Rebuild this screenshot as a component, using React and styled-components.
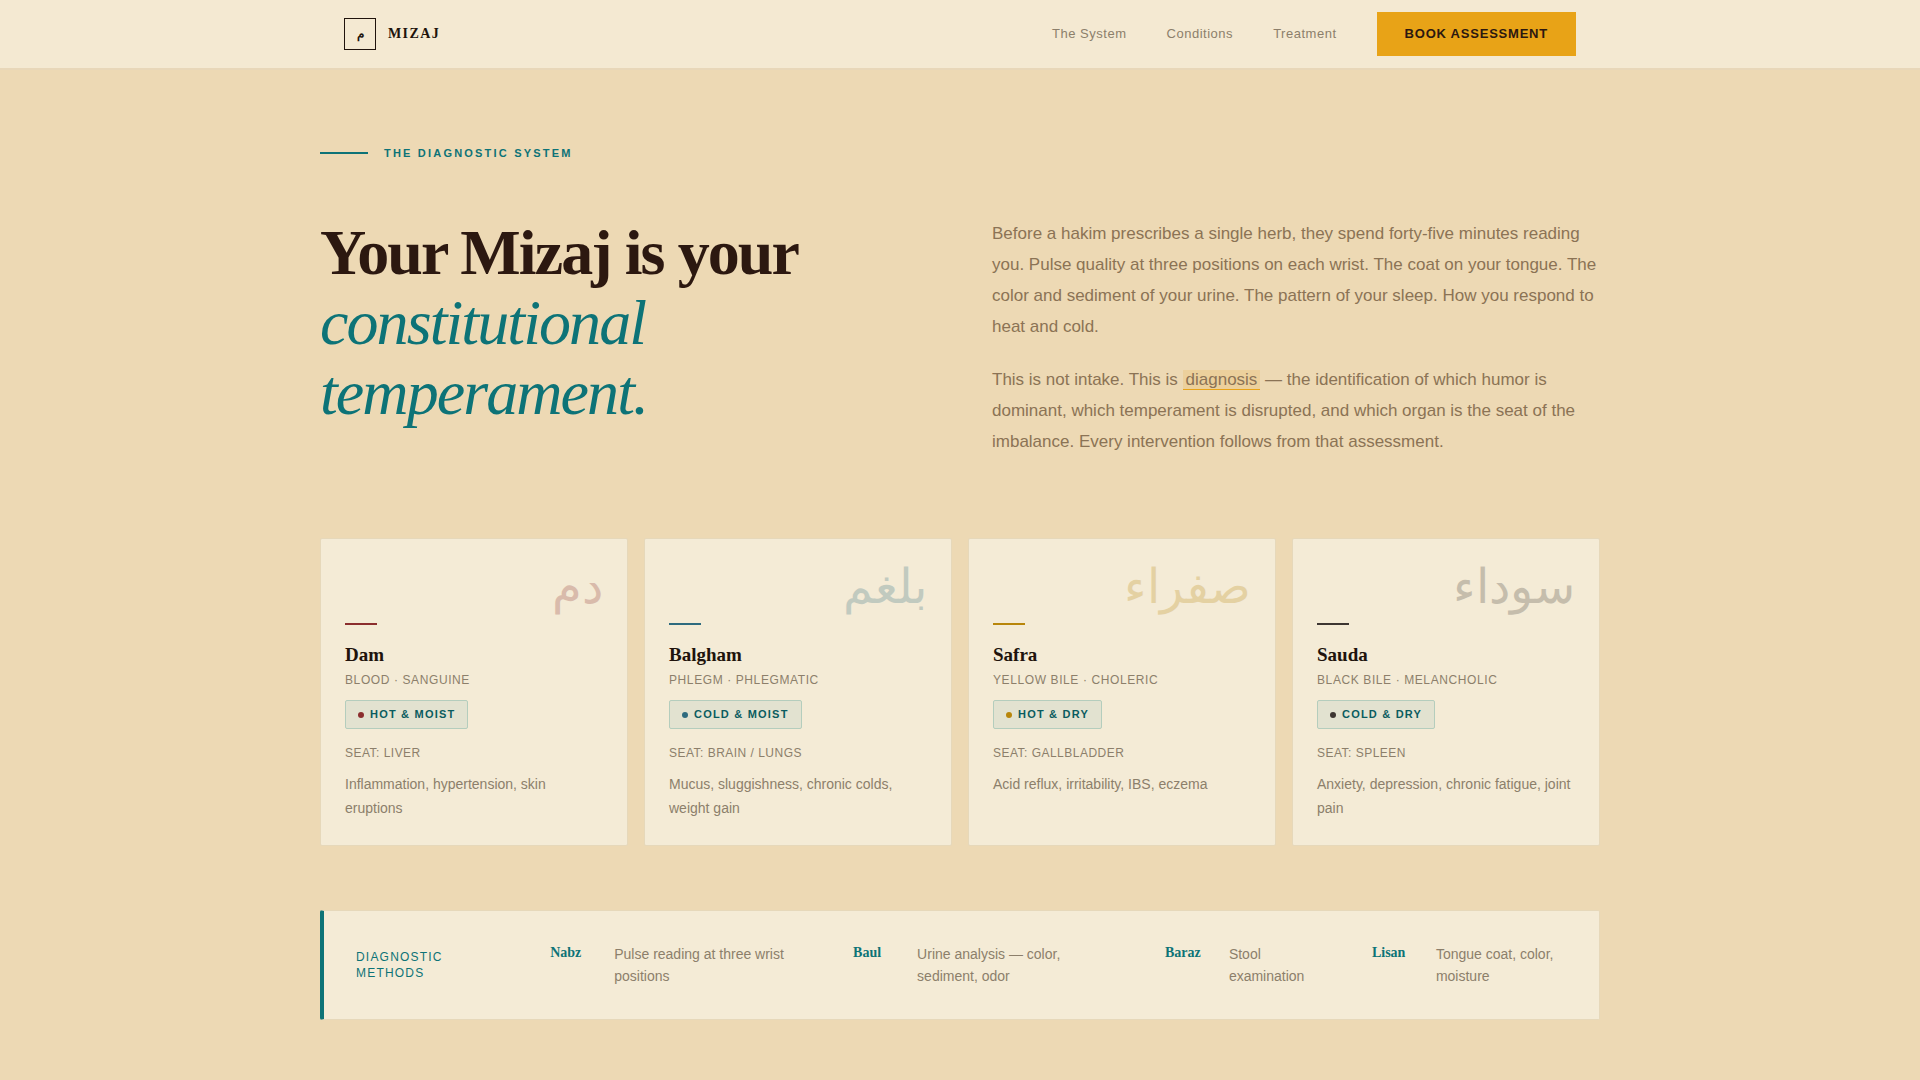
import React from 'react';
import styled, { createGlobalStyle } from 'styled-components';

const serif = '"Liberation Serif", "Times New Roman", serif';
const sans = '"Liberation Sans", Arial, sans-serif';

const colors = {
  sand: '#edd9b4',
  cream: '#f4ebd6',
  nav: '#f4e9d2',
  line: '#e6d8ba',
  ink: '#2c1810',
  dark: '#20130c',
  muted: '#8b7355',
  soft: '#8c7f6b',
  teal: '#0d7377',
  deepTeal: '#0a5c5f',
  gold: '#e8a317',
};

const links = ['The System', 'Conditions', 'Treatment'];

const humors = [
  {
    name: 'Dam',
    arabic: 'دم',
    kind: 'Blood · Sanguine',
    nature: 'Hot & Moist',
    seat: 'Seat: Liver',
    signs: 'Inflammation, hypertension, skin eruptions',
    color: '#8b2e2e',
  },
  {
    name: 'Balgham',
    arabic: 'بلغم',
    kind: 'Phlegm · Phlegmatic',
    nature: 'Cold & Moist',
    seat: 'Seat: Brain / Lungs',
    signs: 'Mucus, sluggishness, chronic colds, weight gain',
    color: '#2e6b7f',
  },
  {
    name: 'Safra',
    arabic: 'صفراء',
    kind: 'Yellow bile · Choleric',
    nature: 'Hot & Dry',
    seat: 'Seat: Gallbladder',
    signs: 'Acid reflux, irritability, IBS, eczema',
    color: '#b8860b',
  },
  {
    name: 'Sauda',
    arabic: 'سوداء',
    kind: 'Black bile · Melancholic',
    nature: 'Cold & Dry',
    seat: 'Seat: Spleen',
    signs: 'Anxiety, depression, chronic fatigue, joint pain',
    color: '#3d3632',
  },
];

const methods = [
  { term: 'Nabz', text: 'Pulse reading at three wrist positions' },
  { term: 'Baul', text: 'Urine analysis — color, sediment, odor' },
  { term: 'Baraz', text: 'Stool examination' },
  { term: 'Lisan', text: 'Tongue coat, color, moisture' },
];

const GlobalStyle = createGlobalStyle`
  * {
    box-sizing: border-box;
  }
  body {
    margin: 0;
    background: ${colors.sand};
    color: ${colors.ink};
    font-family: ${sans};
  }
  h1, h2, p, dl, dt, dd {
    margin: 0;
  }
`;

const Header = styled.header`
  background: ${colors.nav};
  border-bottom: 2px solid #e8d7b9;
`;
const HeaderInner = styled.div`
  max-width: 1280px;
  margin: 0 auto;
  padding: 12px 24px;
  display: flex;
  align-items: center;
  justify-content: space-between;
`;
const Brand = styled.a`
  display: flex;
  align-items: center;
  gap: 12px;
  color: ${colors.dark};
  text-decoration: none;
  font: 700 14px ${serif};
  letter-spacing: 0.1em;
`;
const Mark = styled.span`
  width: 32px;
  height: 32px;
  border: 1px solid ${colors.dark};
  display: flex;
  align-items: center;
  justify-content: center;
  font-size: 12px;
  letter-spacing: 0;
`;
const Nav = styled.nav`
  display: flex;
  align-items: center;
  gap: 40px;
`;
const NavLink = styled.a`
  color: ${colors.soft};
  font-size: 13px;
  line-height: 16px;
  letter-spacing: 0.04em;
  text-decoration: none;
`;
const BookButton = styled.button`
  padding: 14px 28px;
  border: 0;
  background: ${colors.gold};
  color: ${colors.ink};
  font: 700 13px/16px ${sans};
  letter-spacing: 0.06em;
  text-transform: uppercase;
  cursor: pointer;
`;

const Main = styled.main`
  max-width: 1280px;
  margin: 0 auto;
  padding: 74px 0 60px;
`;
const Eyebrow = styled.div`
  display: flex;
  align-items: center;
  gap: 16px;
  margin-bottom: 56px;
  color: ${colors.teal};
  font-size: 11px;
  font-weight: 700;
  line-height: 18px;
  letter-spacing: 0.2em;
  text-transform: uppercase;

  &::before {
    content: '';
    width: 48px;
    height: 2px;
    background: ${colors.teal};
  }
`;
const Intro = styled.section`
  display: grid;
  grid-template-columns: 1fr 1fr;
  gap: 64px;
  align-items: start;
  margin-bottom: 81px;
`;
const Title = styled.h1`
  font: 700 64px/70px ${serif};
  letter-spacing: -0.03em;

  em {
    color: ${colors.teal};
    font-weight: 400;
  }
`;
const Copy = styled.div`
  display: grid;
  gap: 22px;
  color: ${colors.muted};
  font-size: 17px;
  line-height: 31px;
`;
const Highlight = styled.mark`
  padding: 0 3px;
  background: rgba(232, 163, 23, 0.15);
  border-bottom: 1px solid ${colors.gold};
  color: inherit;
`;

const Cards = styled.section`
  display: grid;
  grid-template-columns: repeat(4, 1fr);
  gap: 16px;
  margin-bottom: 64px;
`;
const Card = styled.article`
  padding: 24px 24px 25px;
  background: ${colors.cream};
  border: 1px solid ${colors.line};
  border-radius: 2px;
`;
const Arabic = styled.div`
  color: ${props => props.$color};
  font: 400 48px/48px ${serif};
  text-align: right;
  opacity: 0.25;
`;
const Rule = styled.div`
  width: 32px;
  height: 2px;
  margin: 12px 0 16px;
  background: ${props => props.$color};
`;
const Name = styled.h2`
  margin-bottom: 2px;
  color: ${colors.dark};
  font: 700 19px/27px ${serif};
`;
const Caption = styled.p`
  color: ${colors.soft};
  font-size: 12px;
  line-height: 20px;
  letter-spacing: ${props => (props.$wide ? '0.05em' : '0.04em')};
  text-transform: uppercase;
`;
const Nature = styled.div`
  display: inline-flex;
  align-items: center;
  gap: 6px;
  margin: 10px 0 14px;
  padding: 0 12px;
  background: #e2e2d0;
  border: 1px solid #b4cdbd;
  border-radius: 2px;
  color: ${colors.deepTeal};
  font-size: 11px;
  font-weight: 700;
  line-height: 27px;
  letter-spacing: 0.11em;
  text-transform: uppercase;

  &::before {
    content: '';
    width: 6px;
    height: 6px;
    border-radius: 50%;
    background: ${props => props.$color};
  }
`;
const Signs = styled.p`
  margin-top: 9px;
  color: ${colors.soft};
  font-size: 14px;
  line-height: 24px;
`;

const Methods = styled.section`
  display: flex;
  align-items: center;
  gap: 64px;
  padding: 32px;
  background: ${colors.cream};
  border: 1px solid ${colors.line};
  border-left: 4px solid ${colors.teal};
  border-radius: 2px;
`;
const MethodsLabel = styled.h2`
  color: ${colors.teal};
  font: 400 12px/16px ${sans};
  letter-spacing: 0.1em;
  text-transform: uppercase;
`;
const MethodList = styled.dl`
  display: contents;
`;
const Method = styled.div`
  display: flex;
  gap: 16px;
`;
const Term = styled.dt`
  min-width: 48px;
  color: ${colors.teal};
  font: 700 14px/20px ${serif};
`;
const Detail = styled.dd`
  color: ${colors.soft};
  font-size: 14px;
  line-height: 22px;
`;

const HumorCard = ({ humor }) => (
  <Card>
    <Arabic $color={humor.color} lang="ar">{humor.arabic}</Arabic>
    <Rule $color={humor.color} />
    <Name>{humor.name}</Name>
    <Caption $wide>{humor.kind}</Caption>
    <Nature $color={humor.color}>{humor.nature}</Nature>
    <Caption>{humor.seat}</Caption>
    <Signs>{humor.signs}</Signs>
  </Card>
);

const App = () => (
  <>
    <GlobalStyle />
    <Header>
      <HeaderInner>
        <Brand href="#top">
          <Mark>م</Mark>
          MIZAJ
        </Brand>
        <Nav>
          {links.map(link => (
            <NavLink key={link} href="#">{link}</NavLink>
          ))}
          <BookButton type="button">Book Assessment</BookButton>
        </Nav>
      </HeaderInner>
    </Header>
    <Main>
      <Eyebrow>The Diagnostic System</Eyebrow>
      <Intro>
        <Title>
          Your Mizaj is your <em>constitutional temperament.</em>
        </Title>
        <Copy>
          <p>
            Before a hakim prescribes a single herb, they spend forty-five minutes reading you.
            Pulse quality at three positions on each wrist. The coat on your tongue. The color and
            sediment of your urine. The pattern of your sleep. How you respond to heat and cold.
          </p>
          <p>
            This is not intake. This is <Highlight>diagnosis</Highlight> — the identification of
            which humor is dominant, which temperament is disrupted, and which organ is the seat of
            the imbalance. Every intervention follows from that assessment.
          </p>
        </Copy>
      </Intro>
      <Cards>
        {humors.map(humor => (
          <HumorCard key={humor.name} humor={humor} />
        ))}
      </Cards>
      <Methods>
        <MethodsLabel>Diagnostic Methods</MethodsLabel>
        <MethodList>
          {methods.map(({ term, text }) => (
            <Method key={term}>
              <Term>{term}</Term>
              <Detail>{text}</Detail>
            </Method>
          ))}
        </MethodList>
      </Methods>
    </Main>
  </>
);

export default App;
